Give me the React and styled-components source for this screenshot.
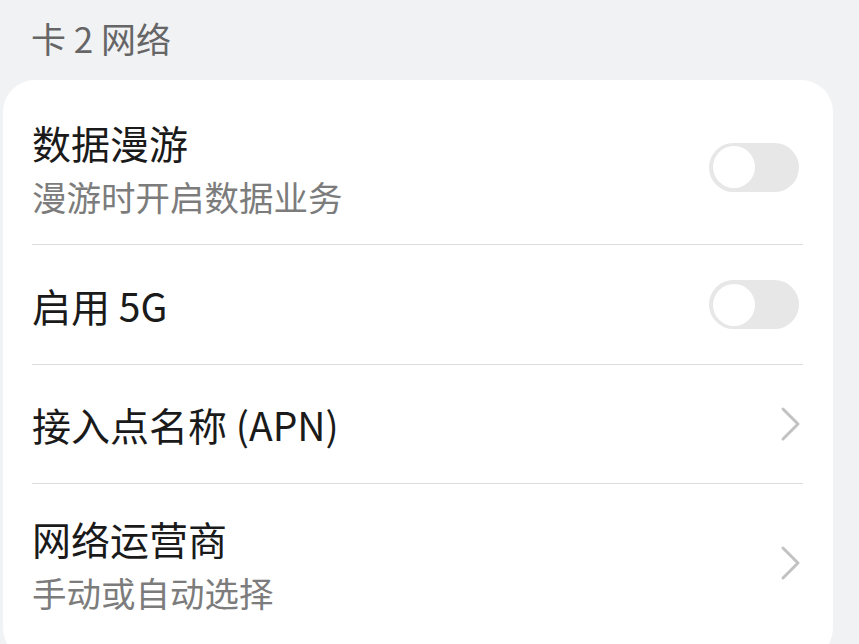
import React from 'react';
import styled, { createGlobalStyle } from 'styled-components';

const GlobalStyle = createGlobalStyle`
    html, body {
        margin: 0;
        padding: 0;
        background: #f1f2f4;
        font-family: "Noto Sans CJK SC", "Noto Sans", sans-serif;
    }
`

const Page = styled.div`
    width: 859px;
    height: 644px;
    overflow: hidden;
    background: #f1f2f4;
`

const Header = styled.div`
    height: 80px;
    padding-left: 31px;
    display: flex;
    align-items: center;
    padding-bottom: 6px;
    box-sizing: border-box;
    font-size: 35px;
    color: #666666;
`

const Card = styled.div`
    margin-left: 3px;
    width: 830px;
    background: #ffffff;
    border-radius: 32px;
    padding: 8px 30px 0 29px;
    box-sizing: border-box;
    height: 580px;
`

const Row = styled.div`
    display: flex;
    align-items: center;
    justify-content: space-between;
    height: ${p => p.h}px;
    box-sizing: border-box;
    border-bottom: ${p => (p.last ? 'none' : '1px solid #dcdcdc')};
`

const Texts = styled.div`
    display: flex;
    flex-direction: column;
    padding-top: ${p => p.offset || 0}px;
`

const Title = styled.div`
    font-size: 39px;
    line-height: 48px;
    color: #1a1a1a;
`

const Sub = styled.div`
    font-size: 34.5px;
    line-height: 48px;
    margin-top: 6px;
    color: #7c7c7c;
`

const Track = styled.div`
    position: relative;
    width: 90px;
    height: 49px;
    border-radius: 25px;
    background: #e7e7e7;
    margin-right: 4px;
    margin-top: ${p => p.offset || 0}px;
    flex-shrink: 0;
`

const Knob = styled.div`
    position: absolute;
    left: 4px;
    top: 3.5px;
    width: 42px;
    height: 42px;
    border-radius: 50%;
    background: #ffffff;
`

const Chevron = styled.svg`
    width: 22px;
    height: 36px;
    margin-right: 2px;
    flex-shrink: 0;
`

const Toggle = ({ offset }) => (
    <Track offset={offset}>
        <Knob />
    </Track>
)

const Arrow = () => (
    <Chevron viewBox="0 0 22 36">
        <polyline points="4,3 19,18 4,33" fill="none" stroke="#c2c2c2" strokeWidth="3" strokeLinecap="round" strokeLinejoin="round" />
    </Chevron>
)

const App = () => (
    <Page>
        <GlobalStyle />
        <Header>卡 2 网络</Header>
        <Card>
            <Row h={157}>
                <Texts offset={6}>
                    <Title>数据漫游</Title>
                    <Sub>漫游时开启数据业务</Sub>
                </Texts>
                <Toggle offset={2} />
            </Row>
            <Row h={120}>
                <Title>启用 5G</Title>
                <Toggle />
            </Row>
            <Row h={119}>
                <Title>接入点名称 (APN)</Title>
                <Arrow />
            </Row>
            <Row h={157} last>
                <Texts offset={4}>
                    <Title>网络运营商</Title>
                    <Sub>手动或自动选择</Sub>
                </Texts>
                <Arrow />
            </Row>
        </Card>
    </Page>
);

export default App
